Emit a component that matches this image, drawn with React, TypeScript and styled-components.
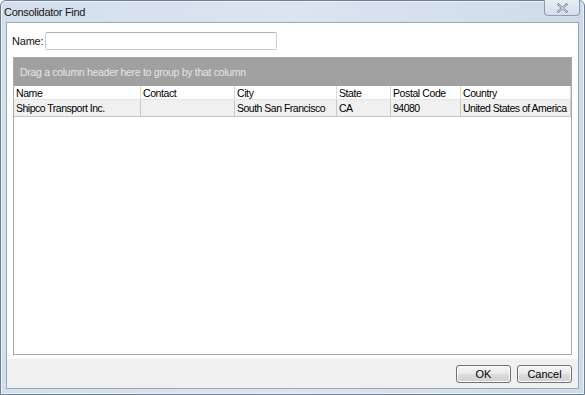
import React from "react";
import styled, { createGlobalStyle } from "styled-components";

const Global = createGlobalStyle`
  html, body { margin: 0; padding: 0; background: #ffffff; }
  * { box-sizing: border-box; }
`;

const Window = styled.div`
  width: 585px;
  height: 395px;
  display: flex;
  flex-direction: column;
  border: 1px solid #6f7f92;
  border-radius: 6px 6px 0 0;
  background: linear-gradient(90deg, #d3dfec 0%, #dbe5f0 50%, #cfdbe9 100%);
  padding: 0 5px 5px 5px;
  box-shadow: inset 0 0 0 1px #eef3f9;
`;

const TitleBar = styled.div`
  height: 21px;
  display: flex;
  align-items: center;
  justify-content: space-between;
  font-family: "Liberation Sans", Arial, sans-serif;
  font-size: 11px;
  letter-spacing: -0.3px;
  color: #141414;
  position: relative;
`;

const Title = styled.span`
  margin-left: -2px;
  margin-top: 1px;
`;

const CloseButton = styled.div`
  position: absolute;
  right: -1px;
  top: -1px;
  width: 36px;
  height: 16px;
  border: 1px solid #8e9cb0;
  border-top: none;
  border-radius: 0 0 4px 4px;
  background: linear-gradient(180deg, #e6edf5 0%, #d4dfeb 100%);
  display: flex;
  align-items: center;
  justify-content: center;
`;

const Client = styled.div`
  flex: 1;
  display: flex;
  flex-direction: column;
  border: 1px solid #97a6b8;
  background: #ffffff;
`;

const NameRow = styled.div`
  height: 34px;
  display: flex;
  align-items: flex-start;
  padding: 9px 0 0 5px;
  gap: 2px;
`;

const Label = styled.label`
  font-family: "Liberation Sans", Arial, sans-serif;
  font-size: 11px;
  letter-spacing: -0.2px;
  color: #141414;
  line-height: 18px;
`;

const TextInput = styled.input`
  width: 232px;
  height: 18px;
  border: 1px solid #c6cdd6;
  border-top-color: #abb3bd;
  border-radius: 2px;
  padding: 0 3px;
  outline: none;
  background: #ffffff;
`;

const Grid = styled.div`
  margin: 0 6px;
  height: 298px;
  border: 1px solid #a9a9a9;
  display: flex;
  flex-direction: column;
  font-family: "Liberation Sans", Arial, sans-serif;
  font-size: 10.5px;
  letter-spacing: -0.4px;
  background: #ffffff;
`;

const GroupPanel = styled.div`
  height: 28px;
  background: #a0a0a0;
  color: #e6e6e6;
  display: flex;
  align-items: center;
  padding-left: 6px;
  letter-spacing: -0.3px;
`;

const Row = styled.div<{ $header?: boolean }>`
  display: grid;
  grid-template-columns: 127px 94px 102px 54px 70px 110px;
  height: ${(p) => (p.$header ? "14px" : "17px")};
  background: ${(p) => (p.$header ? "#ffffff" : "#f0f0f0")};
  border-bottom: 1px solid ${(p) => (p.$header ? "#e4e4e4" : "#c8c8c8")};
  letter-spacing: ${(p) => (p.$header ? "-0.4px" : "-0.5px")};
`;

const Cell = styled.div<{ $header?: boolean }>`
  display: flex;
  align-items: center;
  padding-left: 2px;
  color: #000000;
  white-space: nowrap;
  overflow: hidden;
  border-right: 1px solid ${(p) => (p.$header ? "#dadada" : "#c8c8c8")};
`;

const Spacer = styled.div`
  height: 4px;
`;

const Footer = styled.div`
  flex: 1;
  background: #f0f0f0;
  display: flex;
  justify-content: flex-end;
  align-items: flex-start;
  padding: 6px 6px 0 0;
  gap: 6px;
`;

const Button = styled.button`
  width: 55px;
  height: 18px;
  border: 1px solid #707070;
  border-radius: 3px;
  background: linear-gradient(180deg, #f4f4f4 0%, #ebebeb 48%, #dddddd 52%, #cfcfcf 100%);
  font-family: "Liberation Sans", Arial, sans-serif;
  font-size: 11px;
  color: #000;
  padding: 0;
  box-shadow: inset 0 0 0 1px #fbfbfb;
`;

const columns = ["Name", "Contact", "City", "State", "Postal Code", "Country"];
const data = [
  ["Shipco Transport Inc.", "", "South San Francisco", "CA", "94080", "United States of America"],
];

export default function App() {
  return (
    <>
      <Global />
      <Window>
        <TitleBar>
          <Title>Consolidator Find</Title>
          <CloseButton>
            <svg width="11" height="10" viewBox="0 0 11 10">
              <path d="M1.5 1.5 L9.5 8.5 M9.5 1.5 L1.5 8.5" stroke="#7b8595" strokeWidth="2.2" strokeLinecap="square" />
              <path d="M1.5 1.5 L9.5 8.5 M9.5 1.5 L1.5 8.5" stroke="#f4f6f9" strokeWidth="0.9" />
            </svg>
          </CloseButton>
        </TitleBar>
        <Client>
          <NameRow>
            <Label>Name:</Label>
            <TextInput />
          </NameRow>
          <Grid>
            <GroupPanel>Drag a column header here to group by that column</GroupPanel>
            <Row $header>
              {columns.map((c) => (
                <Cell $header key={c}>{c}</Cell>
              ))}
            </Row>
            {data.map((r, i) => (
              <Row key={i}>
                {r.map((v, j) => (
                  <Cell key={j}>{v}</Cell>
                ))}
              </Row>
            ))}
          </Grid>
          <Spacer />
          <Footer>
            <Button>OK</Button>
            <Button>Cancel</Button>
          </Footer>
        </Client>
      </Window>
    </>
  );
}
